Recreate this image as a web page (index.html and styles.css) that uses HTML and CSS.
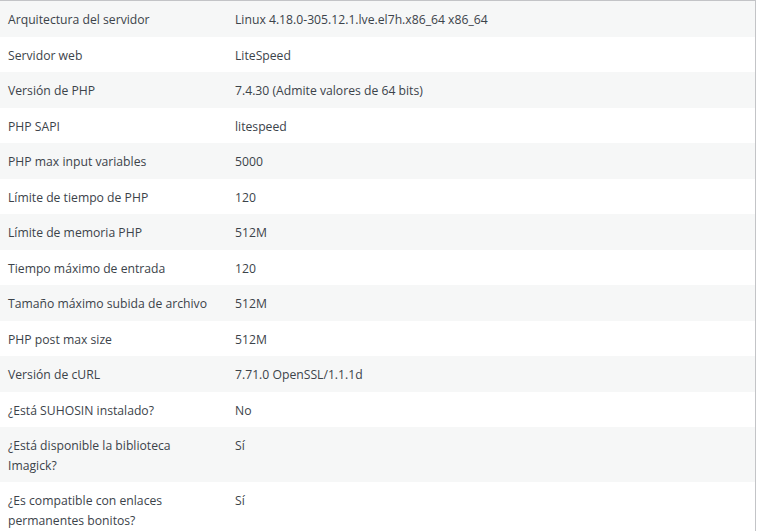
FILE: index.html
```html
<!DOCTYPE html>
<html lang="es">
<head>
<meta charset="utf-8">
<link rel="stylesheet" href="styles.css">
</head>
<body>
<table class="info">
<tbody>
<tr><td class="label">Arquitectura del servidor</td><td>Linux 4.18.0-305.12.1.lve.el7h.x86_64 x86_64</td></tr>
<tr><td class="label">Servidor web</td><td>LiteSpeed</td></tr>
<tr><td class="label">Versión de PHP</td><td>7.4.30 (Admite valores de 64 bits)</td></tr>
<tr><td class="label">PHP SAPI</td><td>litespeed</td></tr>
<tr><td class="label">PHP max input variables</td><td>5000</td></tr>
<tr><td class="label">Límite de tiempo de PHP</td><td>120</td></tr>
<tr><td class="label">Límite de memoria PHP</td><td>512M</td></tr>
<tr><td class="label">Tiempo máximo de entrada</td><td>120</td></tr>
<tr><td class="label">Tamaño máximo subida de archivo</td><td>512M</td></tr>
<tr><td class="label">PHP post max size</td><td>512M</td></tr>
<tr><td class="label">Versión de cURL</td><td>7.71.0 OpenSSL/1.1.1d</td></tr>
<tr><td class="label">¿Está SUHOSIN instalado?</td><td>No</td></tr>
<tr><td class="label">¿Está disponible la biblioteca Imagick?</td><td>Sí</td></tr>
<tr><td class="label">¿Es compatible con enlaces permanentes bonitos?</td><td>Sí</td></tr>
</tbody>
</table>
</body>
</html>
```
FILE: styles.css
```css
html, body {
  margin: 0;
  padding: 0;
  background: #fff;
}
.info {
  width: 756px;
  border-collapse: collapse;
  border-top: 1px solid #c3c4c7;
  border-right: 1px solid #c3c4c7;
  font-family: "Open Sans", "Noto Sans", sans-serif;
  font-size: 12.2px;
  line-height: 19.5px;
  color: #3c434a;
  table-layout: fixed;
}
.info td {
  padding: 9px 10px 7px;
  vertical-align: top;
  text-align: left;
}
.info td.label {
  width: 207px;
  padding-left: 8px;
}
.info tr:nth-child(odd) {
  background: #f6f7f7;
}
```
